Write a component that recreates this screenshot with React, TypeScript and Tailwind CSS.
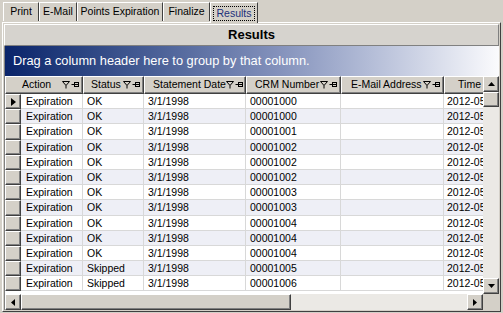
import React from 'react'

const tabs = [
  { label: 'Print', w: 'w-[36px]' },
  { label: 'E-Mail', w: 'w-[38px]' },
  { label: 'Points Expiration', w: 'w-[86px]' },
  { label: 'Finalize', w: 'w-[47px]' },
  { label: 'Results', w: 'w-[48px]' },
]

const rows = [
  ['OK', '00001000'],
  ['OK', '00001000'],
  ['OK', '00001001'],
  ['OK', '00001002'],
  ['OK', '00001002'],
  ['OK', '00001002'],
  ['OK', '00001003'],
  ['OK', '00001003'],
  ['OK', '00001004'],
  ['OK', '00001004'],
  ['OK', '00001004'],
  ['Skipped', '00001005'],
  ['Skipped', '00001006'],
]

// first column header also covers the row selector
const cols = [
  { label: 'Action', w: 'w-[78px]', pl: 'pl-[16px]' },
  { label: 'Status', w: 'w-[61px]', pl: 'pl-[7px]' },
  { label: 'Statement Date', w: 'w-[102px]', pl: 'pl-[8px]' },
  { label: 'CRM Number', w: 'w-[95px]', pl: 'pl-[8px]' },
  { label: 'E-Mail Address', w: 'w-[103px]', pl: 'pl-[9px]' },
]

function FilterPin() {
  return (
    <svg width="17" height="8" viewBox="0 0 17 8" className="shrink-0">
      <path d="M0.5 0.5 H7.5 L4 4.5 Z" fill="none" stroke="#000" strokeWidth="1" />
      <path d="M4 4.5 V7.5" stroke="#000" strokeWidth="1" />
      <path d="M9.5 3.5 H12" stroke="#000" strokeWidth="1" />
      <rect x="12.5" y="1.5" width="4" height="4" fill="none" stroke="#000" strokeWidth="1" />
      <path d="M12.5 3.5 H16.5" stroke="#000" strokeWidth="1" />
    </svg>
  )
}

function Btn({ children, className = '' }: { children?: React.ReactNode; className?: string }) {
  return (
    <div
      className={`flex items-center justify-center bg-[#d4d0c8] border border-t-white border-l-white border-r-[#404040] border-b-[#404040] shadow-[inset_-1px_-1px_0_#808080] ${className}`}
    >
      {children}
    </div>
  )
}

export default function App() {
  return (
    <div
      className="w-[503px] h-[313px] bg-[#d4d0c8] overflow-hidden text-[10.5px] text-black"
      style={{ fontFamily: '"Liberation Sans", Arial, sans-serif' }}
    >
      {/* Tabs */}
      <div className="flex items-end h-[22px] pl-[3px]">
        {tabs.map((t) => {
          const active = t.label === 'Results'
          return (
            <div
              key={t.label}
              className={`${t.w} flex items-center justify-center border-t border-l border-t-white border-l-white border-r border-r-[#404040] ${
                active ? 'h-[21px] -mb-[1px] z-10 bg-[#d4d0c8]' : 'h-[19px] mb-[1px]'
              }`}
            >
              {active ? (
                <span className="border border-dotted border-black px-[2px] leading-[13px] text-[#1c2f7a]">
                  {t.label}
                </span>
              ) : (
                <span>{t.label}</span>
              )}
            </div>
          )
        })}
      </div>

      {/* Panel */}
      <div className="mx-[2px] h-[290px] border-t border-l border-t-white border-l-white border-r border-b border-r-[#404040] border-b-[#404040] flex flex-col p-[1px]">
        {/* Title */}
        <div className="h-[22px] flex items-center justify-center font-bold text-[13px] border border-t-white border-l-white border-r-[#808080] border-b-[#808080] bg-[#d6d3ce]">
          Results
        </div>
        {/* Group by bar */}
        <div className="h-[30px] flex items-center pl-[8px] text-white text-[12.8px] bg-gradient-to-r from-[#0a246a] via-[#8391bb] via-55% to-[#fbfbfd] border-l border-[#808080]">
          Drag a column header here to group by that column.
        </div>

        {/* Grid */}
        <div className="flex-1 flex flex-col bg-white border-l border-[#808080] min-h-0">
          <div className="flex flex-1 min-h-0">
            <div className="flex-1 flex flex-col min-w-0 overflow-hidden">
              {/* Header */}
              <div className="flex h-[18px] shrink-0">
                {cols.map((c) => (
                  <Btn key={c.label} className={`${c.w} ${c.pl} h-[18px] shrink-0 !justify-between pr-[3px]`}>
                    <span className="whitespace-nowrap">{c.label}</span>
                    <FilterPin />
                  </Btn>
                ))}
                <Btn className="w-[42px] h-[18px] shrink-0 !justify-end pr-[4px]">
                  <span>Time</span>
                </Btn>
              </div>
              {/* Rows */}
              {rows.map(([status, crm], i) => (
                <div
                  key={i}
                  className={`flex h-[15.2px] shrink-0 ${i % 2 === 1 ? 'bg-[#eeeff6]' : 'bg-white'}`}
                >
                  <Btn className="w-[16px] shrink-0 h-full">
                    {i === 0 && (
                      <svg width="5" height="8" viewBox="0 0 5 8">
                        <path d="M0 0 L5 4 L0 8 Z" fill="#000" />
                      </svg>
                    )}
                  </Btn>
                  <div className="w-[62px] shrink-0 border-r border-b border-[#d8d8d8] pl-[5px] leading-[14px]">Expiration</div>
                  <div className="w-[61px] shrink-0 border-r border-b border-[#d8d8d8] pl-[4px] leading-[14px]">{status}</div>
                  <div className="w-[102px] shrink-0 border-r border-b border-[#d8d8d8] pl-[4px] leading-[14px]">3/1/1998</div>
                  <div className="w-[95px] shrink-0 border-r border-b border-[#d8d8d8] pl-[4px] leading-[14px]">{crm}</div>
                  <div className="w-[103px] shrink-0 border-r border-b border-[#d8d8d8]" />
                  <div className="w-[42px] shrink-0 border-b border-[#d8d8d8] pl-[3px] leading-[14px] overflow-hidden whitespace-nowrap">2012-05-</div>
                </div>
              ))}
            </div>
            {/* Vertical scrollbar */}
            <div className="w-[16px] shrink-0 flex flex-col bg-[#ebe9e5]">
              <Btn className="h-[16px] w-[16px]">
                <svg width="7" height="4" viewBox="0 0 7 4"><path d="M0 4 L3.5 0 L7 4 Z" fill="#000" /></svg>
              </Btn>
              <Btn className="h-[15px] w-[16px]" />
              <div className="flex-1" />
              <Btn className="h-[16px] w-[16px]">
                <svg width="7" height="4" viewBox="0 0 7 4"><path d="M0 0 L3.5 4 L7 0 Z" fill="#000" /></svg>
              </Btn>
            </div>
          </div>
          {/* Horizontal scrollbar */}
          <div className="flex h-[16px] shrink-0 bg-[#ebe9e5]">
            <Btn className="w-[16px] h-[16px]">
              <svg width="4" height="7" viewBox="0 0 4 7"><path d="M4 0 L0 3.5 L4 7 Z" fill="#000" /></svg>
            </Btn>
            <Btn className="w-[270px] h-[16px]" />
            <div className="flex-1" />
            <Btn className="w-[16px] h-[16px]">
              <svg width="4" height="7" viewBox="0 0 4 7"><path d="M0 0 L4 3.5 L0 7 Z" fill="#000" /></svg>
            </Btn>
            <div className="w-[16px] bg-[#d4d0c8]" />
          </div>
        </div>
      </div>
    </div>
  )
}
